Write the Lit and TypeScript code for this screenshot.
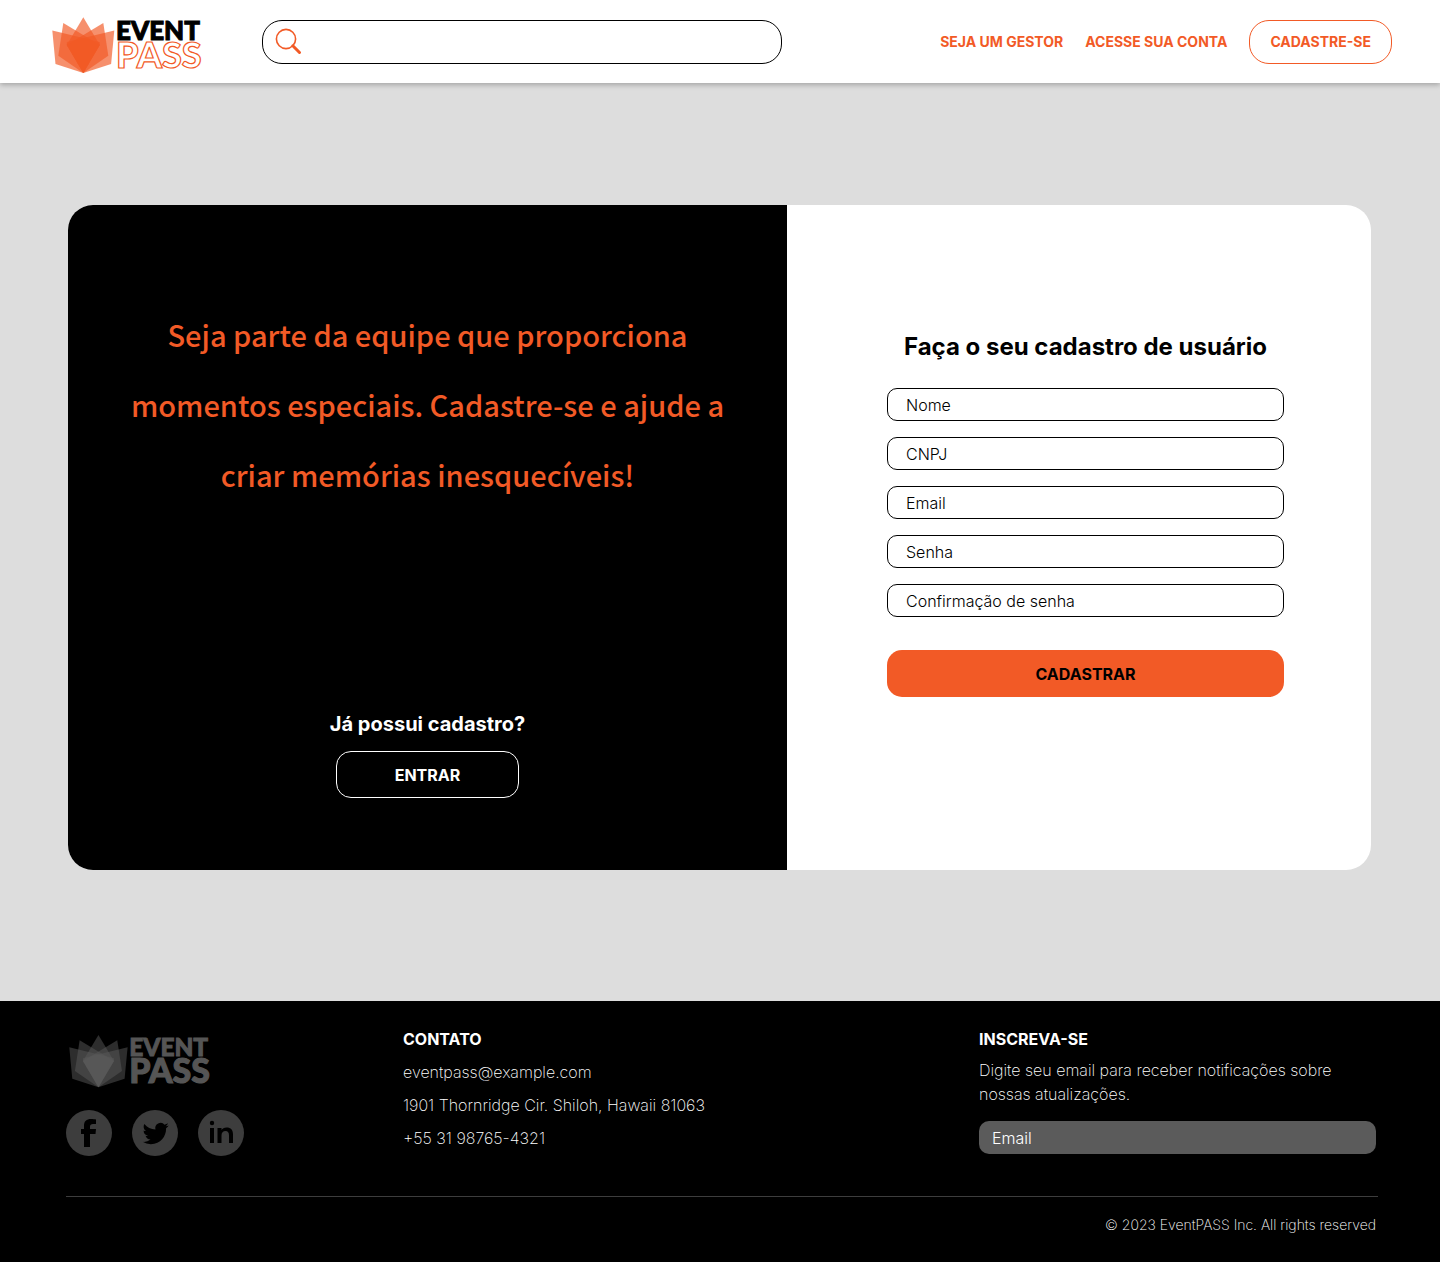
import { LitElement, html, css, svg } from "lit";
import { customElement, property } from "lit/decorators.js";

@customElement("brand-logo")
class BrandLogo extends LitElement {
  @property({ type: Boolean, reflect: true }) muted = false;

  static styles = css`
    :host { display: block; color: #f25a26; }
    :host([muted]) { color: #5a5a5a; }
    .logo { display: block; width: 152px; height: 56px; overflow: visible; }
    :host([muted]) .logo { width: 143px; height: 54px; }
    .petal { fill: currentColor; fill-opacity: 0.67; }
    :host([muted]) .petal { fill-opacity: 0.5; }
    .word { font-family: Lato, sans-serif; font-weight: 900; }
    .event { font-size: 26px; fill: #000; stroke: #000; stroke-width: 1; }
    .pass { font-size: 36px; fill: #fff; stroke: currentColor; stroke-width: 1.2; }
    :host([muted]) .event, :host([muted]) .pass { fill: #555; stroke: #555; }
  `;

  render() {
    return html`<svg class="logo" viewBox="0 0 152 56" role="img" aria-label="Event Pass">
      ${svg`
      <path class="petal" d="M0.300 13.500 L47.800 25 L47.800 28 L31.300 56 L3.500 47 Z" />
      <path class="petal" d="M62.300 13.500 L14.800 25 L14.800 28 L31.300 56 L59.100 47 Z" />
      <path class="petal" d="M11.300 6 L47.800 28 L31.300 56 L6.300 38.700 Z" />
      <path class="petal" d="M51.300 6 L14.800 28 L31.300 56 L56.300 38.700 Z" />
      <path class="petal" d="M31.300 0.300 L47.800 28 L31.300 56 L14.800 28 Z" />
      <text class="word event" x="64" y="23">EVENT</text>
      <text class="word pass" x="64" y="51">PASS</text>`}
    </svg>`;
  }
}

@customElement("app-root")
class AppRoot extends LitElement {
  static styles = css`
    :host { display: block; min-height: 100vh; background: #ddd; color: #000; font-family: Inter, sans-serif; font-size: 16px; line-height: 24px; }
    * { box-sizing: border-box; }
    h1, h2, h3, p { margin: 0; }
    a { color: inherit; text-decoration: none; }
    button, input { font: inherit; }
    .header { display: flex; align-items: center; padding: 11px 48px 10px 52px; background: #fff; box-shadow: 0 2px 5px rgba(0, 0, 0, 0.25); position: relative; }
    .home { padding-top: 6px; }
    .search { display: flex; align-items: center; flex: 0 1 520px; height: 44px; margin-left: 58px; padding: 0 12px; border: 1px solid #000; border-radius: 20px; gap: 8px; }
    .search-icon { width: 28px; height: 28px; flex: none; }
    .search-input { flex: 1; min-width: 0; border: 0; outline: 0; background: none; }
    .nav { display: flex; align-items: center; gap: 22px; margin-left: auto; color: #f25a26; font-size: 14px; font-weight: 700; white-space: nowrap; }
    .signup { display: flex; align-items: center; height: 44px; padding: 0 20px; border: 1px solid; border-radius: 20px; }
    .main { padding: 122px 69px 131px 68px; }
    .card { display: grid; grid-template-columns: 719fr 584fr; min-height: 665px; border-radius: 25px; overflow: hidden; background: #fff; }
    .promo { display: flex; flex-direction: column; align-items: center; justify-content: space-between; padding: 94px 48px 72px; background: #000; color: #fff; text-align: center; }
    .slogan { color: #f25a26; font-family: "Just Another Hand", "Noto Sans CJK JP", sans-serif; font-size: 29px; line-height: 70px; font-weight: 500; }
    .login { display: flex; flex-direction: column; align-items: center; gap: 15px; }
    .login-title { font-size: 20px; line-height: 24px; font-weight: 700; }
    .login-button { width: 183px; height: 47px; border: 1px solid #fff; border-radius: 15px; background: none; color: #fff; font-weight: 700; }
    .form { display: flex; flex-direction: column; gap: 16px; padding: 126px 87px 0 100px; }
    .form-title { margin-bottom: 10px; font-size: 24px; line-height: 31px; font-weight: 700; text-align: center; }
    .field { width: 100%; height: 33px; padding: 0 18px; border: 1px solid #000; border-radius: 10px; background: #fff; font-weight: 300; }
    .field::placeholder { color: #000; opacity: 1; }
    .submit { height: 47px; margin-top: 17px; border: 0; border-radius: 15px; background: #f25a26; color: #000; font-weight: 700; }
    .footer { padding: 26px 62px 25px 66px; background: #000; color: #fff; font-weight: 200; }
    .columns { display: grid; grid-template-columns: 337fr 576fr 399fr; padding-bottom: 40px; border-bottom: 1px solid #3d3d3d; }
    .brand { padding: 7px 3px 0; }
    .social { display: flex; gap: 20px; margin-top: 22px; margin-left: -3px; }
    .social-icon { display: block; width: 46px; height: 46px; }
    .contact { display: flex; flex-direction: column; gap: 9px; }
    .footer-title { font-size: 16px; line-height: 24px; font-weight: 700; }
    .subscribe { padding-right: 2px; }
    .subscribe-text { margin: 7px 0 15px; }
    .subscribe-input { display: block; width: 100%; height: 33px; padding: 0 13px; border: 0; border-radius: 10px; background: #5b5b5b; color: #fff; font-weight: 300; }
    .subscribe-input::placeholder { color: #fff; opacity: 1; }
    .copyright { padding: 16px 2px 0; font-size: 14px; text-align: right; }
  `;

  private fields = [
    ["Nome", "text"],
    ["CNPJ", "text"],
    ["Email", "email"],
    ["Senha", "password"],
    ["Confirmação de senha", "password"],
  ];

  render() {
    return html`
      <header class="header">
        <a class="home" href="#"><brand-logo></brand-logo></a>
        <label class="search">
          <svg class="search-icon" viewBox="0 0 28 28" fill="none" stroke="#f25a26" aria-hidden="true">
            <circle cx="11" cy="11" r="9.600" stroke-width="1.600" />
            <path d="M17.800 17.800 L24.500 24.500" stroke-width="3" stroke-linecap="round" />
          </svg>
          <input class="search-input" type="search" aria-label="Buscar" />
        </label>
        <nav class="nav">
          <a href="#">SEJA UM GESTOR</a>
          <a href="#">ACESSE SUA CONTA</a>
          <a class="signup" href="#">CADASTRE-SE</a>
        </nav>
      </header>
      <main class="main">
        <div class="card">
          <section class="promo">
            <h1 class="slogan">Seja parte da equipe que proporciona<br />momentos especiais. Cadastre-se e ajude a<br />criar memórias inesquecíveis!</h1>
            <div class="login">
              <h2 class="login-title">Já possui cadastro?</h2>
              <button class="login-button" type="button">ENTRAR</button>
            </div>
          </section>
          <form class="form">
            <h2 class="form-title">Faça o seu cadastro de usuário</h2>
            ${this.fields.map(([name, type]) => html`<input class="field" type=${type} placeholder=${name} aria-label=${name} />`)}
            <button class="submit" type="button">CADASTRAR</button>
          </form>
        </div>
      </main>
      <footer class="footer">
        <div class="columns">
          <div class="brand">
            <brand-logo muted></brand-logo>
            <div class="social">
              <a href="#" aria-label="Facebook"><svg class="social-icon" viewBox="0 0 46 46">
                <circle cx="23" cy="23" r="23" fill="#3d3d3d" />
                <path d="M18 37 V24 H15 V19 H18 V16 C18 11 20.500 9 25 9 C27 9 29 9.200 30 9.500 V14 H27 C25 14 24 15 24 16.500 V19 H30 L29.500 24 H24 V37 Z" />
              </svg></a>
              <a href="#" aria-label="Twitter"><svg class="social-icon" viewBox="0 0 46 46">
                <circle cx="23" cy="23" r="23" fill="#3d3d3d" />
                <path transform="translate(10.600 10.500) scale(1.090)" d="M23.950 4.570a10 10 0 0 1-2.820.780 4.960 4.960 0 0 0 2.160-2.730c-.950.560-2 .960-3.130 1.190a4.920 4.920 0 0 0-8.380 4.480C7.690 8.100 4.070 6.130 1.640 3.160a4.820 4.820 0 0 0-.670 2.480c0 1.710.870 3.210 2.190 4.100a4.900 4.900 0 0 1-2.230-.620v.060a4.920 4.920 0 0 0 3.950 4.830 5 5 0 0 1-2.210.080 4.940 4.940 0 0 0 4.600 3.420A9.870 9.870 0 0 1 0 19.540a14 14 0 0 0 7.550 2.210c9.050 0 14-7.500 14-13.980 0-.210 0-.420-.010-.630a9.940 9.940 0 0 0 2.410-2.570z" />
              </svg></a>
              <a href="#" aria-label="LinkedIn"><svg class="social-icon" viewBox="0 0 46 46">
                <circle cx="23" cy="23" r="23" fill="#3d3d3d" />
                <circle cx="14" cy="13" r="2.200" />
                <path d="M12 18 H16 V33 H12 Z M19.500 18 H23.500 V20 C24.500 18.500 26 17.600 28.500 17.600 C33 17.600 35 20 35 24.500 V33 H31 V25.500 C31 22.500 30 21 27.500 21 C25 21 23.500 22.500 23.500 25.500 V33 H19.500 Z" />
              </svg></a>
            </div>
          </div>
          <div class="contact">
            <h3 class="footer-title">CONTATO</h3>
            <a href="mailto:eventpass@example.com">eventpass@example.com</a>
            <p>1901 Thornridge Cir. Shiloh, Hawaii 81063</p>
            <p>+55 31 98765-4321</p>
          </div>
          <div class="subscribe">
            <h3 class="footer-title">INSCREVA-SE</h3>
            <p class="subscribe-text">Digite seu email para receber notificações sobre nossas atualizações.</p>
            <input class="subscribe-input" type="email" placeholder="Email" aria-label="Email" />
          </div>
        </div>
        <p class="copyright">© 2023 EventPASS Inc. All rights reserved</p>
      </footer>
    `;
  }
}
